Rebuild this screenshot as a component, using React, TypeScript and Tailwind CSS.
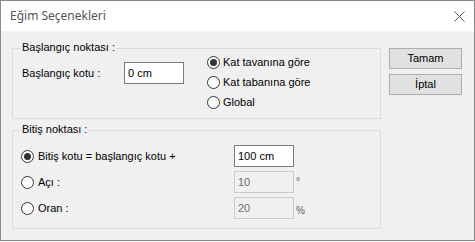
import React from 'react';

const ui = { fontFamily: '"Liberation Sans", Arial, sans-serif' };

function Radio({ checked, label, gap = 'gap-[3px]' }: { checked?: boolean; label: string; gap?: string }) {
  return (
    <div className={`flex items-center ${gap}`}>
      <span className="flex h-[13px] w-[13px] items-center justify-center rounded-full border border-[#333333] bg-white">
        {checked && <span className="h-[7px] w-[7px] rounded-full bg-[#333333]" />}
      </span>
      <span className="text-[11px] leading-[13px] text-black">{label}</span>
    </div>
  );
}

function Field({ value, disabled }: { value: string; disabled?: boolean }) {
  return (
    <div
      className={
        disabled
          ? 'flex h-[22px] w-[60px] items-center border border-[#cccccc] bg-[#f0f0f0] pl-[3px] text-[11px] text-[#6d6d6d]'
          : 'flex h-[22px] w-[60px] items-center border border-[#7a7a7a] bg-white pl-[3px] text-[11px] text-black'
      }
    >
      {value}
    </div>
  );
}

function Group({ title, height, children }: { title: string; height: string; children: React.ReactNode }) {
  return (
    <div className={`relative w-[369px] ${height} border border-[#dcdcdc]`}>
      {/* başlık çerçevenin üstüne biner */}
      <span className="absolute left-[8px] top-[-8px] bg-[#f0f0f0] px-[1px] text-[11px] leading-[13px] text-black">
        {title}
      </span>
      {children}
    </div>
  );
}

function WinButton({ label }: { label: string }) {
  return (
    <button className="flex h-[21px] w-[73px] items-center justify-center border border-[#adadad] bg-[#e1e1e1] text-[11px] text-black">
      {label}
    </button>
  );
}

export default function App() {
  return (
    <div className="h-[242px] w-[475px] bg-white" style={ui}>
      <div className="flex h-[241px] w-[475px] flex-col border border-[#8a8a8a] bg-[#f0f0f0]">
        {/* Başlık çubuğu */}
        <div className="flex h-[30px] shrink-0 items-center justify-between bg-white pl-[9px] pr-[9px]">
          <span className="text-[12px] text-[#555555]" style={{ fontFamily: '"Noto Sans", "Open Sans", sans-serif' }}>
            Eğim Seçenekleri
          </span>
          <svg width="11" height="11" viewBox="0 0 11 11">
            <path d="M0.5 0.5 L10.5 10.5 M10.5 0.5 L0.5 10.5" stroke="#555555" strokeWidth="1" />
          </svg>
        </div>

        <div className="flex flex-col pl-[11px] pt-[17px]">
          {/* Başlangıç noktası + butonlar */}
          <div className="flex items-start gap-[8px]">
            <Group title="Başlangıç noktası :" height="h-[71px]">
              <div className="flex items-start">
                <div className="flex items-center pl-[9px] pt-[13px]">
                  <span className="w-[102px] text-[11px] text-black">Başlangıç kotu :</span>
                  <Field value="0 cm" />
                </div>
                <div className="ml-[23px] flex flex-col pt-[3px]">
                  <div className="flex h-[20px] items-center">
                    <Radio checked label="Kat tavanına göre" />
                  </div>
                  <div className="flex h-[20px] items-center">
                    <Radio label="Kat tabanına göre" />
                  </div>
                  <div className="flex h-[20px] items-center">
                    <Radio label="Global" />
                  </div>
                </div>
              </div>
            </Group>
            <div className="flex flex-col gap-[5px]">
              <WinButton label="Tamam" />
              <WinButton label="İptal" />
            </div>
          </div>

          {/* Bitiş noktası */}
          <div className="mt-[11px]">
            <Group title="Bitiş noktası :" height="h-[99px]">
              <div className="flex flex-col gap-[4px] pl-[8px] pt-[14px]">
                <div className="flex h-[22px] items-center">
                  <div className="w-[213px]">
                    <Radio checked label="Bitiş kotu = başlangıç kotu +" gap="gap-[4px]" />
                  </div>
                  <Field value="100 cm" />
                </div>
                <div className="flex h-[22px] items-center">
                  <div className="w-[213px]">
                    <Radio label="Açı :" gap="gap-[4px]" />
                  </div>
                  <Field value="10" disabled />
                  <span className="ml-[2px] mt-[-2px] text-[10px] text-[#4a5a70]">°</span>
                </div>
                <div className="flex h-[22px] items-center">
                  <div className="w-[213px]">
                    <Radio label="Oran :" gap="gap-[4px]" />
                  </div>
                  <Field value="20" disabled />
                  <span className="ml-[2px] mt-[4px] text-[10px] text-[#4a5a70]">%</span>
                </div>
              </div>
            </Group>
          </div>
        </div>
      </div>
    </div>
  );
}
